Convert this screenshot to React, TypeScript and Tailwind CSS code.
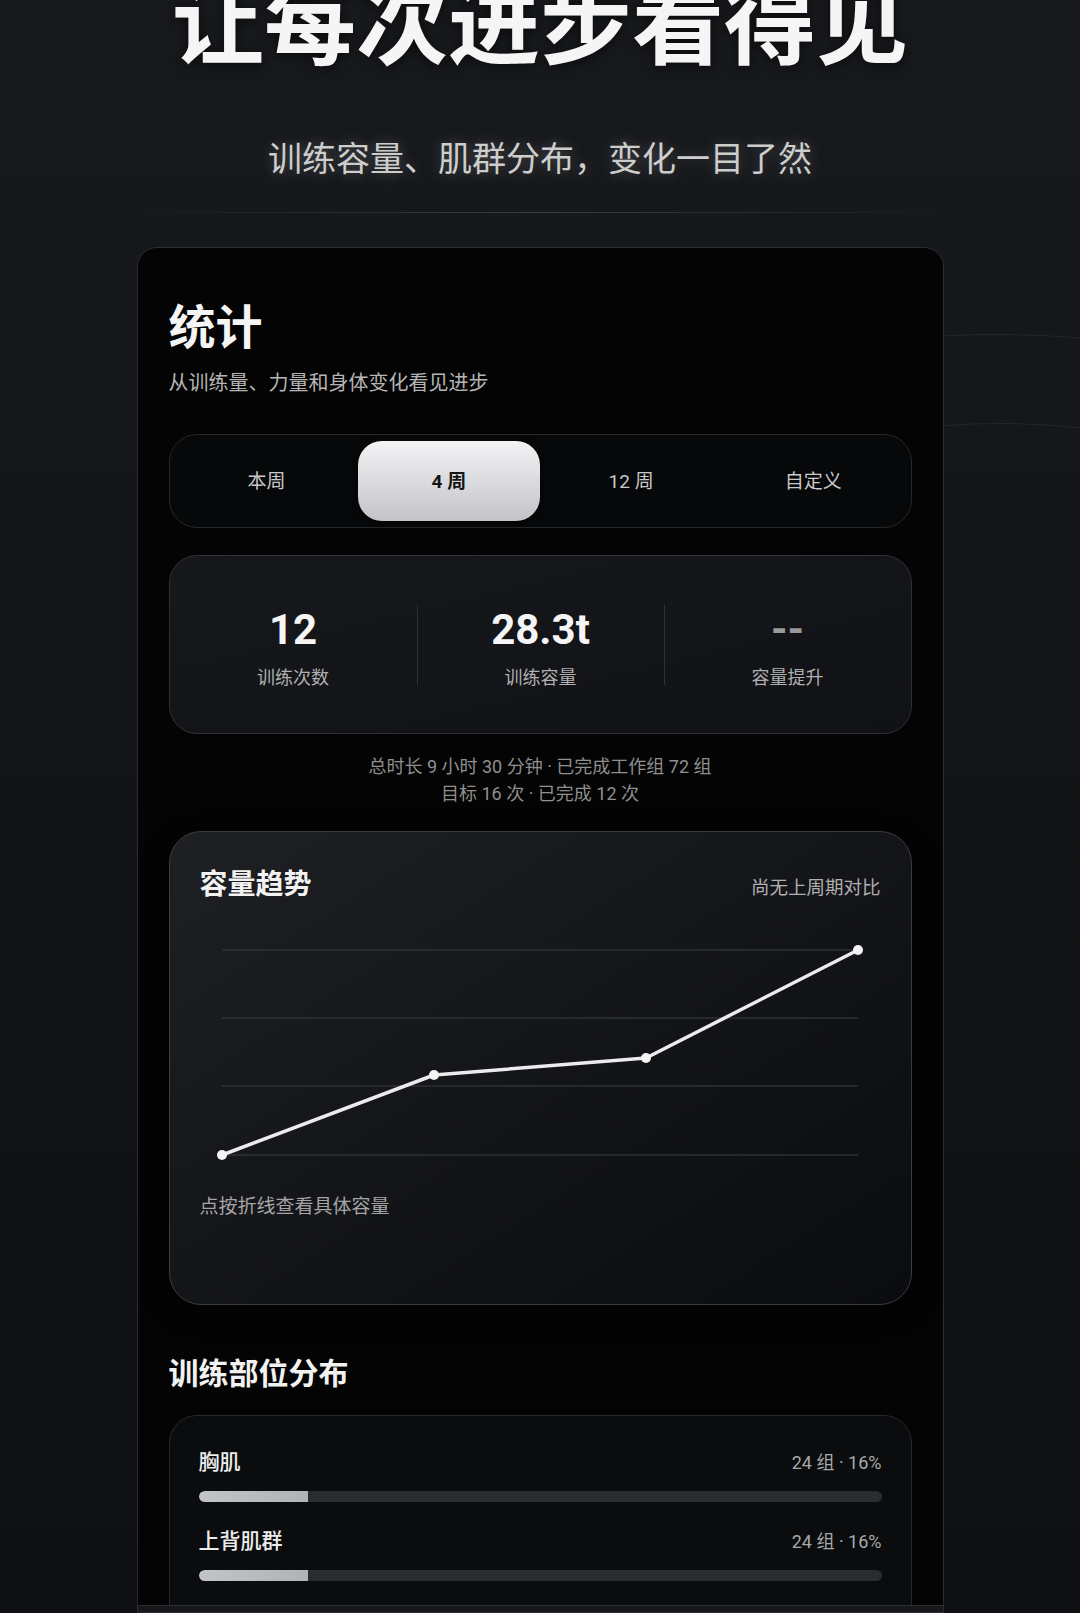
import React from 'react';

const FONT = 'font-[Roboto,"Noto_Sans_CJK_SC",sans-serif]';

const periods = ['本周', '4 周', '12 周', '自定义'];

const stats = [
  { value: '12', label: '训练次数', muted: false },
  { value: '28.3t', label: '训练容量', muted: false },
  { value: '--', label: '容量提升', muted: true },
];

const muscles = [
  { name: '胸肌', sets: 24, pct: 16 },
  { name: '上背肌群', sets: 24, pct: 16 },
  { name: '肩部', sets: 18, pct: 12 },
];

function TrendChart() {
  const grid = [21, 89, 157, 226];
  const pts: [number, number][] = [
    [22, 226],
    [234, 146],
    [446, 129],
    [658, 21],
  ];
  return (
    <svg width="682" height="240" viewBox="0 0 682 240" className="block">
      {grid.map(y => (
        <line key={y} x1="22" x2="658" y1={y} y2={y} stroke="#2e3034" strokeWidth="1.5" />
      ))}
      <polyline
        points={pts.map(p => p.join(',')).join(' ')}
        fill="none"
        stroke="#ececec"
        strokeWidth="3.5"
        strokeLinejoin="round"
        strokeLinecap="round"
      />
      {pts.map(([x, y]) => (
        <circle key={x} cx={x} cy={y} r="5" fill="#f4f4f4" />
      ))}
    </svg>
  );
}

export default function App() {
  return (
    <div
      className={`${FONT} relative w-[1080px] h-[1613px] overflow-hidden bg-gradient-to-b from-[#17191c] via-[#121417] to-[#0e1013] flex flex-col items-center`}
    >
      {/* decorative arcs on the right */}
      <svg className="absolute right-0 top-[318px]" width="140" height="130" viewBox="0 0 140 130">
        <path d="M0 18 Q70 14 140 20" stroke="#24262a" strokeWidth="1" fill="none" />
        <path d="M0 108 Q70 102 140 110" stroke="#24262a" strokeWidth="1" fill="none" />
      </svg>

      {/* Hero */}
      <h1 className="mt-[-20px] text-[92px] leading-none font-bold text-[#f5f5f5] tracking-normal drop-shadow-[0_2px_6px_rgba(0,0,0,0.6)]">
        让每次进步看得见
      </h1>
      <p className="mt-[70px] text-[34px] leading-none text-[#cdcdcd] [text-shadow:0_0_14px_rgba(255,255,255,0.25)]">
        训练容量、肌群分布，变化一目了然
      </p>
      <div className="mt-[36px] h-px w-[845px] bg-gradient-to-r from-transparent via-[#3a3c40] to-transparent" />

      {/* Phone card */}
      <div className="relative mt-[34px] w-[807px] h-[1370px] flex flex-col rounded-t-[20px] border border-[#2b2d31] bg-[#040404] overflow-hidden">
        <div className="flex-1 min-h-0 overflow-hidden px-[31px] pt-[56px]">
          <h2 className="text-[47px] leading-none font-bold text-[#f5f5f5]">统计</h2>
          <p className="mt-[22px] text-[20px] leading-none text-[#b5b5b5]">从训练量、力量和身体变化看见进步</p>

          {/* Period selector */}
          <div className="mt-[41px] h-[94px] rounded-[28px] border border-[#26282b] bg-[#070809] p-[6px] grid grid-cols-4">
            {periods.map(p =>
              p === '4 周' ? (
                <div
                  key={p}
                  className="flex items-center justify-center pt-[2px] rounded-[24px] bg-gradient-to-b from-[#f3f3f5] to-[#c3c4c8] text-[19px] font-bold text-[#141414] shadow-[0_2px_8px_rgba(0,0,0,0.5)]"
                >
                  {p}
                </div>
              ) : (
                <div key={p} className="flex items-center justify-center pt-[2px] text-[19px] text-[#c9c9c9]">
                  {p}
                </div>
              )
            )}
          </div>

          {/* Stats */}
          <div className="mt-[27px] h-[179px] rounded-[28px] border border-[#2f3135] bg-gradient-to-br from-[#17181b] to-[#111215] grid grid-cols-3 items-center">
            {stats.map((s, i) => (
              <div
                key={s.label}
                className={`h-[80px] pt-[7px] flex flex-col items-center justify-center ${i > 0 ? 'border-l border-[#303236]' : ''}`}
              >
                <div
                  className={`text-[42px] leading-none font-bold ${s.muted ? 'text-[#9a9a9a]' : 'text-[#f5f5f5]'}`}
                >
                  {s.value}
                </div>
                <div className="mt-[18px] text-[18px] leading-none text-[#b0b0b0]">{s.label}</div>
              </div>
            ))}
          </div>

          <div className="mt-[19px] text-center text-[18px] leading-[27px] text-[#8f8f8f]">
            <p>总时长 9 小时 30 分钟 · 已完成工作组 72 组</p>
            <p>目标 16 次 · 已完成 12 次</p>
          </div>

          {/* Trend */}
          <div className="mt-[24px] h-[474px] rounded-[32px] border border-[#3a3c41] bg-gradient-to-br from-[#1e2024] via-[#141518] to-[#0b0c0f] px-[30px] pt-[39px] shadow-[0_8px_24px_rgba(0,0,0,0.6)]">
            <div className="flex items-baseline justify-between">
              <h3 className="text-[28px] leading-none font-bold text-[#f2f2f2]">容量趋势</h3>
              <span className="text-[18.5px] leading-none text-[#b0b0b0]">尚无上周期对比</span>
            </div>
            <div className="mt-[30px]">
              <TrendChart />
            </div>
            <p className="mt-[28px] text-[19px] leading-none text-[#a5a5a5]">点按折线查看具体容量</p>
          </div>

          {/* Muscle distribution */}
          <h3 className="mt-[54px] text-[30px] leading-none font-bold text-[#f2f2f2]">训练部位分布</h3>
          <div className="mt-[26px] rounded-[28px] border border-[#26282c] bg-[#0b0c0e] px-[29px] pt-[36px] pb-[30px] flex flex-col gap-[29px]">
            {muscles.map(m => (
              <div key={m.name}>
                <div className="flex items-baseline justify-between">
                  <span className="text-[21px] leading-none font-medium text-[#ececec]">{m.name}</span>
                  <span className="text-[18px] leading-none text-[#a9a9a9]">
                    {m.sets} 组 · {m.pct}%
                  </span>
                </div>
                <div className="mt-[18px] h-[11px] rounded-full bg-[#2a2c30] overflow-hidden">
                  <div
                    className="h-full rounded-l-full bg-gradient-to-r from-[#c2c3c6] to-[#b1b3b6]"
                    style={{ width: `${m.pct}%` }}
                  />
                </div>
              </div>
            ))}
          </div>
        </div>
        <div className="shrink-0 h-[7px] border-t border-[#2b2d31] bg-[#17181b]" />
      </div>
    </div>
  );
}
